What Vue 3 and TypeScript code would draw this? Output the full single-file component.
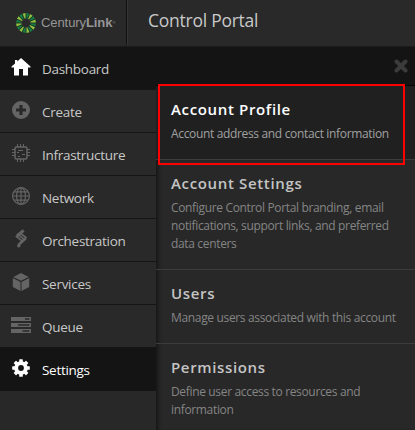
<script setup lang="ts">
interface NavItem {
  label: string
  icon: string
  active?: boolean
}
interface Entry {
  title: string
  lines: string[]
  current?: boolean
}

const nav: NavItem[] = [
  { label: 'Dashboard', icon: 'home', active: true },
  { label: 'Create', icon: 'plus' },
  { label: 'Infrastructure', icon: 'chip' },
  { label: 'Network', icon: 'globe' },
  { label: 'Orchestration', icon: 'flow' },
  { label: 'Services', icon: 'cube' },
  { label: 'Queue', icon: 'queue' },
  { label: 'Settings', icon: 'gear', active: true },
]

const entries: Entry[] = [
  { title: 'Account Profile', lines: ['Account address and contact information'], current: true },
  {
    title: 'Account Settings',
    lines: ['Configure Control Portal branding, email', 'notifications, support links, and preferred', 'data centers'],
  },
  { title: 'Users', lines: ['Manage users associated with this account'] },
  { title: 'Permissions', lines: ['Define user access to resources and', 'information'] },
]

const rays = Array.from({ length: 16 }, (_, i) => i)
const teeth = Array.from({ length: 8 }, (_, i) => i)
</script>

<template>
  <div class="portal">
    <header class="top">
      <div class="brand">
        <svg class="burst" viewBox="-10 -10 20 20">
          <path
            v-for="i in rays"
            :key="i"
            d="M-.4-4.4 L-1.5-9.8 L1.5-9.8 L.4-4.4Z"
            :transform="`rotate(${i * 22.5 + 11})`"
            :fill="i % 2 ? '#8cc63f' : '#108043'"
          />
        </svg>
        <span class="wordmark">Century<b>Link</b><i>®</i></span>
      </div>
      <h1>Control Portal</h1>
    </header>
    <div class="body">
      <nav>
        <a v-for="item in nav" :key="item.label" :class="['nav-item', item.icon, { active: item.active }]">
          <svg class="icon" viewBox="0 0 20 20">
            <path v-if="item.icon === 'home'" fill="currentColor" d="M10 1 19.5 9.6V10.5H17V18.5H12V12H8V18.5H3V10.5H.5V9.6L4 6.4V3H6.3V4.4Z" />
            <path
              v-else-if="item.icon === 'plus'"
              fill="currentColor"
              fill-rule="evenodd"
              d="M10 1a9 9 0 1 1 0 18a9 9 0 0 1 0-18ZM8.4 5V8.4H5V11.6H8.4V15H11.6V11.6H15V8.4H11.6V5Z"
            />
            <g v-else-if="item.icon === 'chip'" fill="none" stroke="currentColor">
              <rect x="4" y="4" width="12" height="12" rx="1.5" stroke-width="1.5" />
              <path d="M6.5 1V4M9.5 1V4M12.5 1V4M6.5 16V19M9.5 16V19M12.5 16V19M1 6.5H4M1 9.5H4M1 12.5H4M16 6.5H19M16 9.5H19M16 12.5H19" />
              <path d="M7 7.5H12M6 9.5H8M11 11.5H14M7 13.5H9" />
            </g>
            <g v-else-if="item.icon === 'globe'" fill="none" stroke="currentColor" stroke-width="1.2">
              <circle cx="10" cy="10" r="8.4" />
              <ellipse cx="10" cy="10" rx="4.4" ry="8.4" />
              <path d="M10 1.5V18.5M1.5 10H18.5M3 5.8H17M3 14.2H17" />
            </g>
            <g v-else-if="item.icon === 'flow'" fill="none" stroke="currentColor">
              <path stroke-width="3" d="M12.6 1.4 6 7" />
              <path stroke-width="1.7" d="M4.8 7 11.6 12.4M6.8 5.4 13.6 10.6M9 3.8 15.6 9" />
              <path stroke-width="2.6" d="M14.8 9.2 7.6 15.8" />
              <circle cx="7.8" cy="16.8" r="1.7" fill="currentColor" stroke="none" />
            </g>
            <path v-else-if="item.icon === 'cube'" fill="currentColor" d="M10 1 17.7 4.9 10 8.8 2.3 4.9ZM1.8 6 9.5 9.9V19L1.8 15ZM18.2 6 10.5 9.9V19L18.2 15Z" />
            <g v-else-if="item.icon === 'queue'">
              <path fill="currentColor" d="M0 2H20V6H0ZM0 8H20V12H0ZM0 14H20V18H0Z" />
              <path stroke="#292929" stroke-width="1.3" stroke-linecap="round" d="M14.5 4H18M7.5 10H18M12 16H18" />
            </g>
            <g v-else fill="currentColor">
              <path fill-rule="evenodd" d="M10 3.2a6.8 6.8 0 1 1 0 13.6a6.8 6.8 0 0 1 0-13.6ZM10 7.1a2.9 2.9 0 1 0 0 5.8a2.9 2.9 0 0 0 0-5.8Z" />
              <rect v-for="t in teeth" :key="t" x="8.2" y="1.2" width="3.6" height="3.3" rx=".6" :transform="`rotate(${t * 45} 10 10)`" />
            </g>
          </svg>
          <span>{{ item.label }}</span>
        </a>
      </nav>
      <main>
        <div class="close">
          <svg viewBox="0 0 14 14"><path d="M2.5 2.5 11.5 11.5M11.5 2.5 2.5 11.5" stroke="#3b3b3b" stroke-width="4" stroke-linecap="round" /></svg>
        </div>
        <section v-for="entry in entries" :key="entry.title" :class="{ current: entry.current }">
          <h2>{{ entry.title }}</h2>
          <p><span v-for="line in entry.lines" :key="line">{{ line }}</span></p>
        </section>
        <div class="highlight"></div>
      </main>
    </div>
  </div>
</template>

<style>
body {
  margin: 0;
  background: #282828;
}
</style>

<style scoped>
.portal {
  width: 415px;
  height: 430px;
  overflow: hidden;
  background: #282828;
  color: #c8c8c8;
  font-family: 'Open Sans', 'Noto Sans', sans-serif;
}
.top {
  display: flex;
  height: 47px;
  box-sizing: border-box;
  border-bottom: 1px solid #1c1a1b;
  background: #292929;
}
.brand {
  display: flex;
  align-items: center;
  box-sizing: border-box;
  width: 127px;
  height: 45px;
  padding-left: 16px;
  border-right: 1px solid #111;
  box-shadow: 1px 0 #353535;
}
.burst {
  width: 20px;
  height: 20px;
  flex: none;
}
.wordmark {
  margin-left: 5px;
  color: #969696;
  font: 13px/20px 'Liberation Sans', sans-serif;
  letter-spacing: -0.08px;
  white-space: nowrap;
}
.wordmark i {
  font-size: 4px;
  font-style: normal;
  vertical-align: 3px;
}
h1 {
  margin: 0 0 0 21px;
  font-size: 17.5px;
  line-height: 41px;
  font-weight: 400;
  letter-spacing: -0.25px;
}
.body {
  display: flex;
  height: 383px;
}
nav {
  width: 156px;
  flex: none;
}
.nav-item {
  display: flex;
  align-items: center;
  box-sizing: border-box;
  height: 43px;
  padding: 0 0 2px 11px;
  border-bottom: 1px solid #151515;
  background: #292929;
  color: #646464;
  font-size: 13.5px;
  letter-spacing: -0.29px;
}
.nav-item span {
  margin: 3px 0 0 11px;
  color: #c8c8c8;
  line-height: 20px;
  white-space: nowrap;
}
.nav-item.active {
  background: #141414;
  color: #fff;
}
.nav-item.gear span {
  color: #fff;
}
.nav-item.gear {
  height: 43px;
}
.icon {
  width: 20px;
  height: 20px;
  flex: none;
}
main {
  position: relative;
  flex: 1;
  box-shadow: inset 5px 0 4px -3px #151515;
}
.close {
  display: flex;
  justify-content: flex-end;
  align-items: center;
  box-sizing: border-box;
  height: 39px;
  padding: 0 7px 0 0;
  border-bottom: 1px solid #050505;
  background: #141414;
}
.close svg {
  width: 14px;
  height: 14px;
}
section {
  padding: 12px 0 16px 15px;
  border-bottom: 1px solid #3c3c3c;
}
section.current {
  background: #202020;
}
section:nth-of-type(4) {
  border: 0;
}
h2 {
  margin: 0;
  color: #c4c4c4;
  font-size: 15px;
  line-height: 22px;
  font-weight: 600;
  letter-spacing: 0.65px;
}
.current h2 {
  color: #fff;
}
p {
  margin: 5px 0 0;
  color: #858585;
  font-size: 12px;
  line-height: 18px;
  letter-spacing: -0.34px;
}
p span {
  display: block;
  white-space: nowrap;
}
.current p {
  color: #a0a0a0;
}
.highlight {
  position: absolute;
  left: 2px;
  top: 37px;
  box-sizing: border-box;
  width: 247px;
  height: 81px;
  border: 2px solid #f00;
}
</style>
